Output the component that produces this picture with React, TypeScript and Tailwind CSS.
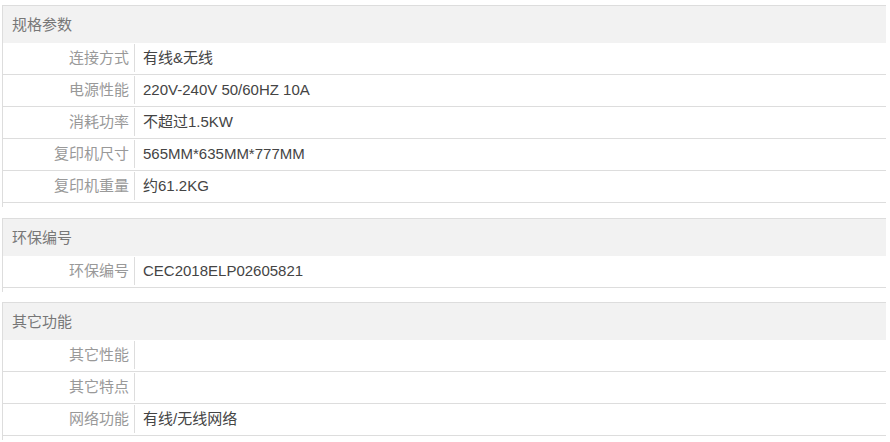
const sections: { title: string; rows: [string, string][] }[] = [
  {
    title: '规格参数',
    rows: [
      ['连接方式', '有线&无线'],
      ['电源性能', '220V-240V 50/60HZ 10A'],
      ['消耗功率', '不超过1.5KW'],
      ['复印机尺寸', '565MM*635MM*777MM'],
      ['复印机重量', '约61.2KG'],
    ],
  },
  {
    title: '环保编号',
    rows: [['环保编号', 'CEC2018ELP02605821']],
  },
  {
    title: '其它功能',
    rows: [
      ['其它性能', ''],
      ['其它特点', ''],
      ['网络功能', '有线/无线网络'],
    ],
  },
];

const ParamRow: React.FC<{ label: string; value: string }> = ({ label, value }) => {
  return (
    <div className="flex h-[32px] items-start border-b border-[#dddddd]">
      <div className="mt-[1px] h-[28px] w-[132px] shrink-0 border-r border-[#dddddd] pr-[5px] text-right leading-[28px] text-[#999999]">
        {label}
      </div>
      <div className="mt-[1px] h-[28px] pl-[8px] leading-[28px] text-[#444444]">{value}</div>
    </div>
  );
};

export default function App() {
  return (
    <div
      className="bg-white pt-[5px] text-[15px]"
      style={{ fontFamily: '"Liberation Sans", "Noto Sans CJK SC", sans-serif' }}
    >
      {sections.map((s, i) => (
        <div
          key={s.title}
          className={
            i === 0
              ? 'mb-[11px] ml-[2px] w-[884px] border-l border-t border-[#dddddd] pb-[4px]'
              : 'mb-[10px] ml-[2px] w-[884px] border-l border-t border-[#dddddd] pb-[4px]'
          }
        >
          <div className="h-[37px] bg-[#f2f2f2] pl-[9px] leading-[37px] text-[#777777]">
            {s.title}
          </div>
          {s.rows.map(([label, value]) => (
            <ParamRow key={label} label={label} value={value} />
          ))}
        </div>
      ))}
    </div>
  );
}
